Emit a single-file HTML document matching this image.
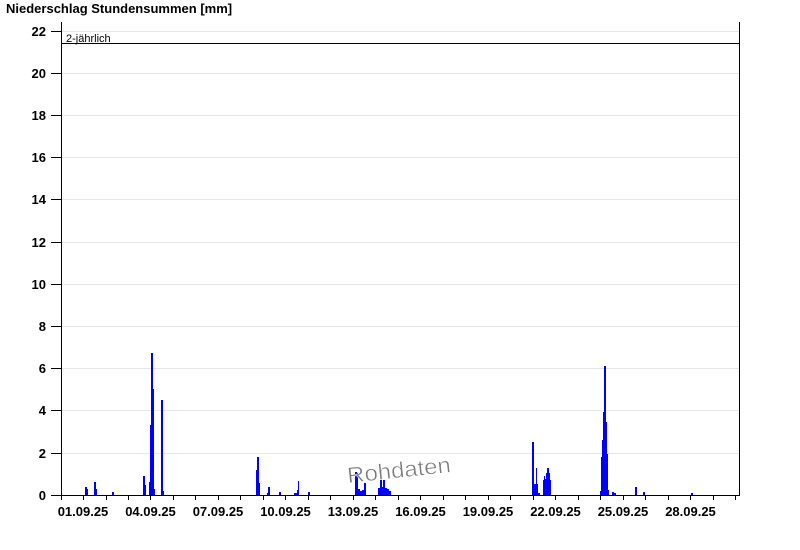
<!DOCTYPE html>
<html><head><meta charset="utf-8"><style>
html,body{margin:0;padding:0;background:#fff;width:800px;height:550px;overflow:hidden}
svg{display:block;font-family:"Liberation Sans",Arial,sans-serif}
</style></head><body>
<svg width="800" height="550" xmlns="http://www.w3.org/2000/svg">
<text x="6" y="13" font-size="13" font-weight="bold" fill="#000">Niederschlag Stundensummen [mm]</text>
<g stroke="#e6e6e6" stroke-width="1">
<line x1="61" y1="31.5" x2="739" y2="31.5"/><line x1="61" y1="73.5" x2="739" y2="73.5"/>
<line x1="61" y1="115.5" x2="739" y2="115.5"/><line x1="61" y1="157.5" x2="739" y2="157.5"/>
<line x1="61" y1="199.5" x2="739" y2="199.5"/><line x1="61" y1="242.5" x2="739" y2="242.5"/>
<line x1="61" y1="284.5" x2="739" y2="284.5"/><line x1="61" y1="326.5" x2="739" y2="326.5"/>
<line x1="61" y1="368.5" x2="739" y2="368.5"/><line x1="61" y1="410.5" x2="739" y2="410.5"/>
<line x1="61" y1="453.5" x2="739" y2="453.5"/>
</g>
<g font-size="13" font-weight="bold" text-anchor="end" fill="#000">
<text x="46" y="36">22</text><text x="46" y="78">20</text><text x="46" y="120">18</text>
<text x="46" y="162">16</text><text x="46" y="204">14</text><text x="46" y="247">12</text>
<text x="46" y="289">10</text><text x="46" y="331">8</text><text x="46" y="373">6</text>
<text x="46" y="415">4</text><text x="46" y="458">2</text><text x="46" y="500">0</text>
</g>
<g stroke="#000" stroke-width="1">
<line x1="51" y1="31.5" x2="61" y2="31.5"/><line x1="51" y1="73.5" x2="61" y2="73.5"/>
<line x1="51" y1="115.5" x2="61" y2="115.5"/><line x1="51" y1="157.5" x2="61" y2="157.5"/>
<line x1="51" y1="199.5" x2="61" y2="199.5"/><line x1="51" y1="242.5" x2="61" y2="242.5"/>
<line x1="51" y1="284.5" x2="61" y2="284.5"/><line x1="51" y1="326.5" x2="61" y2="326.5"/>
<line x1="51" y1="368.5" x2="61" y2="368.5"/><line x1="51" y1="410.5" x2="61" y2="410.5"/>
<line x1="51" y1="453.5" x2="61" y2="453.5"/><line x1="51" y1="495.5" x2="61" y2="495.5"/>
</g>
<line x1="61" y1="43.5" x2="739" y2="43.5" stroke="#000"/>
<text x="66" y="42" font-size="11" fill="#000">2-jährlich</text>
<g fill="#0000ff">
<rect x="85" y="487" width="2" height="8"/><rect x="87" y="489" width="1" height="6"/>
<rect x="94" y="482" width="2" height="13"/><rect x="96" y="489" width="1" height="6"/>
<rect x="112" y="492" width="2" height="3"/>
<rect x="143" y="476" width="2" height="19"/><rect x="145" y="485" width="1" height="10"/>
<rect x="149" y="482" width="1" height="13"/><rect x="150" y="425" width="1" height="70"/>
<rect x="151" y="353" width="2" height="142"/><rect x="153" y="389" width="1" height="106"/>
<rect x="154" y="489" width="1" height="6"/>
<rect x="161" y="400" width="2" height="95"/><rect x="163" y="491" width="1" height="4"/>
<rect x="256" y="470" width="1" height="25"/><rect x="257" y="457" width="2" height="38"/><rect x="259" y="483" width="1" height="12"/>
<rect x="267" y="493" width="1" height="2"/><rect x="268" y="487" width="2" height="8"/>
<rect x="279" y="492" width="2" height="3"/>
<rect x="294" y="493" width="3" height="2"/><rect x="297" y="490" width="1" height="5"/><rect x="298" y="481" width="1" height="14"/>
<rect x="308" y="492" width="2" height="3"/>
<rect x="355" y="472" width="2" height="23"/><rect x="357" y="473" width="1" height="22"/>
<rect x="358" y="489" width="2" height="6"/><rect x="360" y="491" width="2" height="4"/>
<rect x="362" y="490" width="2" height="5"/><rect x="364" y="483" width="2" height="12"/>
<rect x="378" y="488" width="2" height="7"/><rect x="380" y="480" width="2" height="15"/>
<rect x="382" y="487" width="1" height="8"/><rect x="383" y="480" width="2" height="15"/>
<rect x="385" y="488" width="2" height="7"/><rect x="387" y="489" width="2" height="6"/><rect x="389" y="491" width="2" height="4"/>
<rect x="532" y="442" width="2" height="53"/><rect x="534" y="484" width="2" height="11"/>
<rect x="536" y="468" width="1" height="27"/><rect x="537" y="484" width="1" height="11"/>
<rect x="538" y="493" width="2" height="2"/>
<rect x="543" y="480" width="1" height="15"/><rect x="544" y="476" width="1" height="19"/>
<rect x="545" y="479" width="1" height="16"/><rect x="546" y="473" width="1" height="22"/>
<rect x="547" y="468" width="2" height="27"/><rect x="549" y="473" width="1" height="22"/>
<rect x="550" y="480" width="1" height="15"/>
<rect x="600" y="491" width="1" height="4"/><rect x="601" y="457" width="1" height="38"/>
<rect x="602" y="440" width="1" height="55"/><rect x="603" y="412" width="1" height="83"/>
<rect x="604" y="366" width="2" height="129"/><rect x="606" y="422" width="1" height="73"/>
<rect x="607" y="454" width="1" height="41"/><rect x="608" y="490" width="1" height="5"/>
<rect x="612" y="492" width="2" height="3"/><rect x="614" y="493" width="2" height="2"/>
<rect x="635" y="487" width="2" height="8"/><rect x="643" y="492" width="2" height="3"/>
<rect x="691" y="493" width="2" height="2"/>
</g>
<line x1="61.5" y1="22" x2="61.5" y2="496" stroke="#000"/>
<line x1="739.5" y1="22" x2="739.5" y2="496" stroke="#000"/>
<line x1="61" y1="495.5" x2="740" y2="495.5" stroke="#000"/>
<g stroke="#000">
<path d="M61.5 495v5M83.5 495v5M106.5 495v5M128.5 495v5M150.5 495v5M173.5 495v5M195.5 495v5M218.5 495v5M240.5 495v5M263.5 495v5M285.5 495v5M308.5 495v5M330.5 495v5M353.5 495v5M375.5 495v5M398.5 495v5M420.5 495v5M443.5 495v5M465.5 495v5M488.5 495v5M510.5 495v5M533.5 495v5M555.5 495v5M578.5 495v5M600.5 495v5M623.5 495v5M645.5 495v5M668.5 495v5M690.5 495v5M713.5 495v5M735.5 495v5"/>
</g>
<g font-size="13" font-weight="bold" text-anchor="middle" fill="#000">
<text x="83" y="516">01.09.25</text><text x="150.5" y="516">04.09.25</text><text x="218" y="516">07.09.25</text>
<text x="285.5" y="516">10.09.25</text><text x="353" y="516">13.09.25</text><text x="420.5" y="516">16.09.25</text>
<text x="488" y="516">19.09.25</text><text x="555.5" y="516">22.09.25</text><text x="623" y="516">25.09.25</text>
<text x="690.5" y="516">28.09.25</text>
</g>
<text x="348" y="483" font-size="22" fill="#7a7a7a" stroke="#fff" stroke-width="0.5" transform="rotate(-6 348 483)" textLength="104" lengthAdjust="spacingAndGlyphs">Rohdaten</text>
</svg>
</body></html>
